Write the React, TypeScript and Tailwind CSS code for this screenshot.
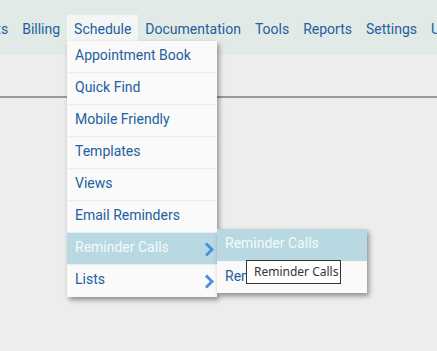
import React from 'react';

const navItems = ['Contacts', 'Billing', 'Schedule', 'Documentation', 'Tools', 'Reports', 'Settings', 'Users'];

const menuItems = [
  { label: 'Appointment Book' },
  { label: 'Quick Find' },
  { label: 'Mobile Friendly' },
  { label: 'Templates' },
  { label: 'Views' },
  { label: 'Email Reminders' },
  { label: 'Reminder Calls', sub: true, active: true },
  { label: 'Lists', sub: true },
];

function Chevron() {
  return (
    <svg width="10" height="15" viewBox="0 0 10 15" className="absolute right-[3px] top-[9px]">
      <polyline points="2,1.5 8,7.5 2,13.5" fill="none" stroke="#4a90de" strokeWidth="3" />
    </svg>
  );
}

export default function App() {
  return (
    <div className="relative w-[437px] h-[351px] overflow-hidden bg-[#ededed] font-['Roboto',sans-serif] text-[14px]">
      <div className="flex items-end h-[55px] bg-[#e1eae6]">
        <div className="flex ml-[-55px]">
          {navItems.map((item) => (
            <div
              key={item}
              className={`h-[40px] px-[7px] pt-[4px] leading-[20px] text-[#22609f] whitespace-nowrap ${
                item === 'Schedule' ? 'bg-[#f4f6f5]' : ''
              }`}
            >
              {item}
            </div>
          ))}
        </div>
      </div>
      <div className="mt-[41px] h-[2px] bg-[#9a9a9a]"></div>

      <div className="absolute left-[67px] top-[41px] w-[150px] bg-[#fafafa] shadow-[2px_3px_5px_rgba(0,0,0,0.4)]">
        {menuItems.map((m, i) => (
          <div
            key={m.label}
            className={`relative h-[32px] pl-[8px] leading-[28px] ${
              i < menuItems.length - 1 ? 'border-b border-[#ececec]' : ''
            } ${m.active ? 'bg-[#b8d9e2] text-[#f5f9fa]' : 'text-[#22609f]'}`}
          >
            {m.label}
            {m.sub && <Chevron />}
          </div>
        ))}
      </div>

      <div className="absolute left-[217px] top-[229px] w-[150px] bg-[#fafafa] shadow-[2px_3px_5px_rgba(0,0,0,0.4)]">
        <div className="h-[32px] pl-[8px] leading-[28px] bg-[#b8d9e2] text-[#f5f9fa]">Reminder Calls</div>
        <div className="h-[32px] pl-[8px] leading-[30px] text-[#22609f]">Reminder Log</div>
      </div>

      <div className="absolute left-[246px] top-[260px] w-[95px] h-[24px] border border-[#333] bg-white pl-[7px] text-[12px] leading-[22px] text-[#333] font-['Noto_Sans',sans-serif]">
        Reminder Calls
      </div>
    </div>
  );
}
